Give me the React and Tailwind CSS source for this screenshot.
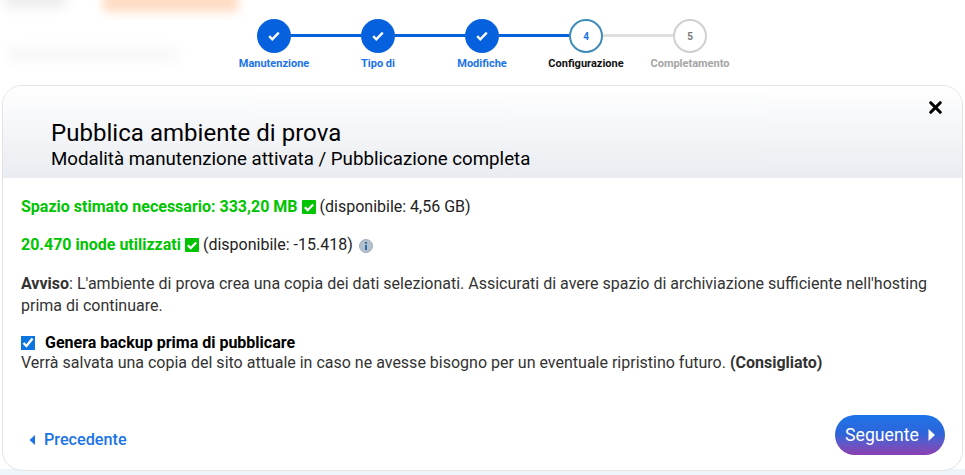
import { X } from "lucide-react";

const steps = [
  { label: "Manutenzione", state: "done" },
  { label: "Tipo di", state: "done" },
  { label: "Modifiche", state: "done" },
  { label: "Configurazione", state: "current", n: 4 },
  { label: "Completamento", state: "todo", n: 5 },
];

const GreenCheck = () => (
  <svg width="14" height="14" viewBox="0 0 14 14" className="shrink-0">
    <rect width="14" height="14" rx="1" fill="#00c400" />
    <path d="M2.8 7.2l2.9 2.9L11.2 4.4" fill="none" stroke="#fff" strokeWidth="2.2" />
  </svg>
);

const Stepper = () => (
  <div className="flex justify-center h-[85px] pt-[19px] pr-[1px]">
    {steps.map((step, i) => (
      <div key={step.label} className="relative w-[104px] flex flex-col items-center">
        {i > 0 && (
          <div
            className={`absolute left-[-35px] top-[15px] w-[70px] h-[3px] ${
              step.state === "todo" ? "bg-[#e0e0e0]" : "bg-[#0561de]"
            }`}
          />
        )}
        {step.state === "done" && (
          <div className="w-[34px] h-[34px] rounded-full bg-[#0561de] flex items-center justify-center">
            <svg width="12" height="10" viewBox="0 0 12 10" className="mt-[-1px]">
              <path d="M1.2 5.2l3.1 3.1L10.8 1.6" fill="none" stroke="#fff" strokeWidth="2.4" />
            </svg>
          </div>
        )}
        {step.state === "current" && (
          <div className="w-[34px] h-[34px] rounded-full bg-white border-2 border-[#3f8cb8] flex items-center justify-center text-[10px] font-bold text-[#1a73e8]">
            {step.n}
          </div>
        )}
        {step.state === "todo" && (
          <div className="w-[34px] h-[34px] rounded-full bg-white border-2 border-[#d0d0d0] flex items-center justify-center text-[10px] font-bold text-[#777]">
            {step.n}
          </div>
        )}
        <div
          className={`mt-[3px] text-[11px] leading-[16px] font-bold whitespace-nowrap ${
            step.state === "done"
              ? "text-[#1a73e8]"
              : step.state === "current"
                ? "text-[#111]"
                : "text-[#a5a5a5]"
          }`}
        >
          {step.label}
        </div>
      </div>
    ))}
  </div>
);

export default function App() {
  return (
    <div className="relative w-[965px] h-[475px] overflow-hidden bg-white font-['Roboto',sans-serif] text-[16px]">
      {/* blurred page content behind the dialog */}
      <div className="absolute left-[103px] top-[-8px] w-[135px] h-[20px] bg-[#ffdcc4] blur-[5px]" />
      <div className="absolute left-[5px] top-[-8px] w-[60px] h-[16px] bg-[#ececec] blur-[6px]" />
      <div className="absolute left-[8px] top-[48px] w-[170px] h-[12px] bg-[#f6f6f6] blur-[6px]" />
      <div className="absolute left-0 bottom-0 w-full h-[6px] bg-[#eef5fb]" />

      <Stepper />

      <div className="relative mx-[2px] h-[386px] bg-white border border-[#e2e2e2] rounded-[20px] overflow-hidden flex flex-col">
        <div className="relative h-[92px] shrink-0 pl-[48px] pt-[31px] bg-gradient-to-b from-white to-[#e9ecf1] text-black">
          <div className="text-[24px] leading-[32px] tracking-[0.04px]">Pubblica ambiente di prova</div>
          <div className="text-[18.7px] leading-[20px]">
            Modalità manutenzione attivata / Pubblicazione completa
          </div>
          <X size={19} strokeWidth={4} className="absolute right-[17px] top-[12px] text-black" />
        </div>

        <div className="flex-1 pl-[18px] pr-[18px] pt-[18px] text-[#333] leading-[22px]">
          <div className="flex items-center gap-[4px] h-[22px]">
            <span className="font-bold text-[#00c400]">Spazio stimato necessario: 333,20 MB</span>
            <GreenCheck />
            <span className="text-[#222]">(disponibile: 4,56 GB)</span>
          </div>
          <div className="flex items-center gap-[4px] h-[22px] mt-[16px]">
            <span className="font-bold text-[#00c400]">20.470 inode utilizzati</span>
            <GreenCheck />
            <span className="text-[#222]">(disponibile: -15.418)</span>
            <svg width="14" height="14" viewBox="0 0 14 14" className="ml-[2px] mt-[2px]">
              <circle cx="7" cy="7" r="6.5" fill="#b4c0cc" stroke="#a0aebc" />
              <circle cx="7" cy="3.9" r="1.1" fill="#2a6cab" />
              <rect x="6" y="6" width="2" height="5" fill="#2a6cab" />
            </svg>
          </div>
          <p className="mt-[17px]">
            <b>Avviso</b>: L'ambiente di prova crea una copia dei dati selezionati. Assicurati di avere spazio di
            archiviazione sufficiente nell'hosting prima di continuare.
          </p>
          <label className="flex items-center gap-[10px] mt-[16px] h-[20px] font-bold text-black">
            <input type="checkbox" defaultChecked className="w-[14px] h-[14px] ml-0 scale-[1.07] accent-[#0b74de]" />
            <span>Genera backup prima di pubblicare</span>
          </label>
          <p className="mt-[-1px]">
            Verrà salvata una copia del sito attuale in caso ne avesse bisogno per un eventuale ripristino futuro.{" "}
            <b>(Consigliato)</b>
          </p>
        </div>

        <div className="absolute left-[26px] bottom-[18px] flex items-center gap-[9px] text-[#1a73e8] text-[16.2px] font-medium">
          <svg width="6" height="10" viewBox="0 0 6 10">
            <path d="M6 0v10L0.5 5z" fill="#1a73e8" />
          </svg>
          Precedente
        </div>
        <button className="absolute right-[17px] bottom-[15px] w-[110px] h-[40px] rounded-[20px] bg-gradient-to-b from-[#1a73e8] via-[#2f64d8] to-[#8a3db0] text-white text-[17.7px] flex items-center justify-center gap-[9px]">
          Seguente
          <svg width="7" height="12" viewBox="0 0 7 12">
            <path d="M0.5 0v12L7 6z" fill="#fff" />
          </svg>
        </button>
      </div>
    </div>
  );
}
